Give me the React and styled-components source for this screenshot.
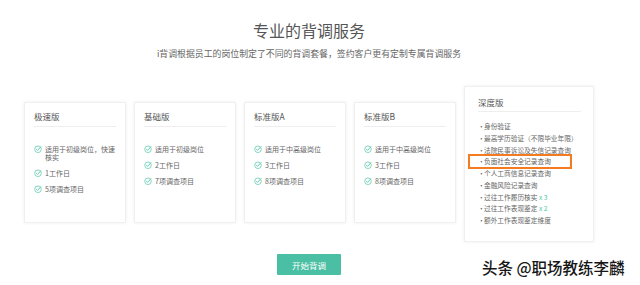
import React from "react";
import styled, { createGlobalStyle } from "styled-components";

const Global = createGlobalStyle`
  html, body { margin: 0; padding: 0; background: #fff; }
  body { font-family: "Noto Sans CJK SC", "Noto Sans", sans-serif; overflow: hidden; }
`;

const Page = styled.div`
  position: relative;
  width: 640px;
  height: 285px;
`;

const Main = styled.div`
  width: 618px;
  display: flex;
  flex-direction: column;
  align-items: center;
  padding-top: 20px;
`;

const Title = styled.h1`
  margin: 0;
  font-size: 16px;
  line-height: 20px;
  font-weight: 400;
  color: #555;
`;

const Subtitle = styled.p`
  margin: 8px 0 0;
  font-size: 8.9px;
  line-height: 12px;
  color: #666;
`;

const Row = styled.div`
  margin-top: 26px;
  display: flex;
  align-items: center;
  gap: 8px;
`;

const Card = styled.div`
  box-sizing: border-box;
  width: ${(p) => (p.$deep ? 130 : 102)}px;
  height: ${(p) => (p.$deep ? 156 : 121)}px;
  padding: ${(p) => (p.$deep ? "10px 12px 0 13px" : "8px 9px 0 9px")};
  background: #fff;
  border: 1px solid #f0f0f0;
  box-shadow: 0 0 3px rgba(0, 0, 0, 0.07);
  margin-bottom: ${(p) => (p.$deep ? 0 : 3)}px;
`;

const CardTitle = styled.div`
  font-size: 8.5px;
  line-height: 11px;
  color: #555;
  padding-bottom: ${(p) => (p.$deep ? 3 : 4)}px;
  border-bottom: 1px solid #eee;
`;

const List = styled.ul`
  list-style: none;
  margin: ${(p) => (p.$deep ? "9px 0 0" : "18px 0 0")};
  padding: 0;
  display: flex;
  flex-direction: column;
  gap: ${(p) => (p.$deep ? 0 : 8)}px;
`;

const CheckItem = styled.li`
  display: flex;
  align-items: flex-start;
  gap: 3px;
  font-size: 7px;
  line-height: 8px;
  color: #666;
  svg { flex: none; }
`;

const BulletItem = styled.li`
  position: relative;
  font-size: 6.7px;
  line-height: 11.75px;
  color: #666;
  padding-left: 6px;
  white-space: nowrap;
  &::before {
    content: "·";
    position: absolute;
    left: 0;
    top: 0;
  }
`;

const Times = styled.span`
  color: #4cc4a8;
`;

const Highlight = styled.span`
  position: absolute;
  left: -10px;
  top: -2px;
  width: 104px;
  height: 15px;
  box-sizing: border-box;
  border: 2px solid #f47b20;
`;

const Button = styled.button`
  margin-top: 12px;
  width: 64px;
  height: 21px;
  border: none;
  border-radius: 1px;
  background: #4bbfa4;
  color: #fff;
  font-family: inherit;
  font-size: 8.5px;
  padding: 0;
`;

const Watermark = styled.div`
  position: absolute;
  left: 482px;
  top: 257px;
  font-size: 15.5px;
  line-height: 20px;
  font-weight: 500;
  color: #161616;
  white-space: nowrap;
  text-shadow: 0 0 2px #fff, 0 0 2px #fff;
`;

const Check = () => (
  <svg width="8" height="8" viewBox="0 0 16 16">
    <circle cx="8" cy="8.5" r="6.6" fill="none" stroke="#5cc9ae" strokeWidth="1.5" />
    <path d="M4.6 8.2 L7.2 10.8 L13.6 3.6" fill="none" stroke="#5cc9ae" strokeWidth="1.8" strokeLinecap="round" strokeLinejoin="round" />
  </svg>
);

const plans = [
  { name: "极速版", items: ["适用于初级岗位，快速核实", "1工作日", "5项调查项目"] },
  { name: "基础版", items: ["适用于初级岗位", "2工作日", "7项调查项目"] },
  { name: "标准版A", items: ["适用于中高级岗位", "3工作日", "8项调查项目"] },
  { name: "标准版B", items: ["适用于中高级岗位", "3工作日", "8项调查项目"] },
];

const deepItems = [
  { t: "身份验证" },
  { t: "最高学历验证（不限毕业年限）" },
  { t: "法院民事诉讼及失信记录查询" },
  { t: "负面社会安全记录查询", hl: true },
  { t: "个人工商信息记录查询" },
  { t: "金融风险记录查询" },
  { t: "过往工作履历核实 ", x: "x 3" },
  { t: "过往工作表现鉴定 ", x: "x 2" },
  { t: "额外工作表现鉴定维度" },
];

export default function App() {
  return (
    <Page>
      <Global />
      <Main>
        <Title>专业的背调服务</Title>
        <Subtitle>i背调根据员工的岗位制定了不同的背调套餐，签约客户更有定制专属背调服务</Subtitle>
        <Row>
          {plans.map((p) => (
            <Card key={p.name}>
              <CardTitle>{p.name}</CardTitle>
              <List>
                {p.items.map((it) => (
                  <CheckItem key={it}>
                    <Check />
                    <span>{it}</span>
                  </CheckItem>
                ))}
              </List>
            </Card>
          ))}
          <Card $deep>
            <CardTitle $deep>深度版</CardTitle>
            <List $deep>
              {deepItems.map((it) => (
                <BulletItem key={it.t}>
                  {it.t}
                  {it.x && <Times>{it.x}</Times>}
                  {it.hl && <Highlight />}
                </BulletItem>
              ))}
            </List>
          </Card>
        </Row>
        <Button>开始背调</Button>
      </Main>
      <Watermark>头条 @职场教练李麟</Watermark>
    </Page>
  );
}
